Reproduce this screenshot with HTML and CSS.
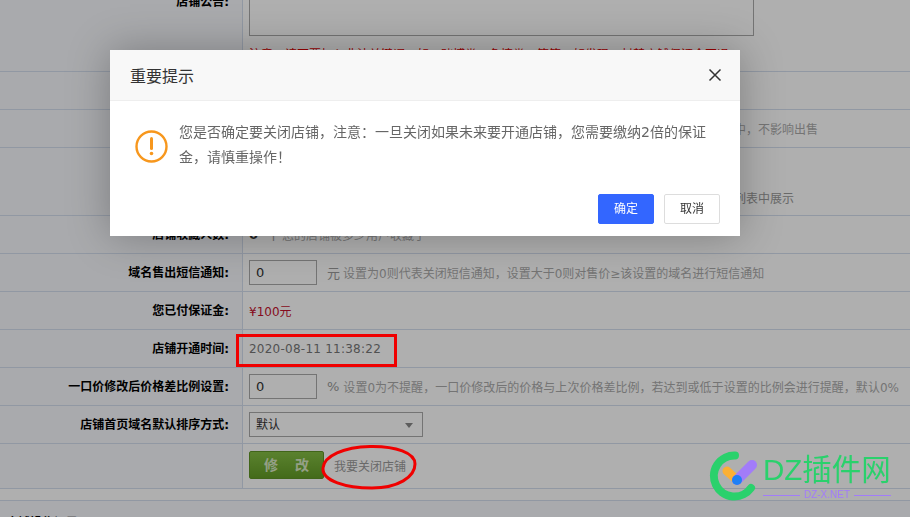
FILE: index.html
```html
<!DOCTYPE html>
<html lang="zh">

<head>
    <meta charset="UTF-8">
    <meta name="viewport" content="width=device-width, initial-scale=1.0">
    <title>店铺设置</title>
    <link rel="stylesheet" href="styles.css">
</head>

<body>
    <div class="form">
        <div class="row row-notice">
            <div class="label">店铺公告:</div>
            <div class="value value-stack">
                <div class="textarea"></div>
                <div class="note">注意，请不要加入非法关键词，如、赌博类、色情类、等等，如发现，封禁店铺保证金不退。</div>
            </div>
        </div>
        <div class="row">
            <div class="label"></div>
            <div class="value"></div>
        </div>
        <div class="row">
            <div class="label"></div>
            <div class="value"><span class="hint hint-tail">中，不影响出售</span></div>
        </div>
        <div class="row row-tall">
            <div class="label"></div>
            <div class="value value-low"><span class="hint hint-tail hint-dark">列表中展示</span></div>
        </div>
        <div class="row">
            <div class="label">店铺收藏人数:</div>
            <div class="value"><b class="count">0</b><span class="unit">个</span><span class="hint">您的店铺被多少用户收藏了</span></div>
        </div>
        <div class="row">
            <div class="label">域名售出短信通知:</div>
            <div class="value">
                <div class="input">0</div>
                <span class="unit">元</span>
                <span class="hint">设置为0则代表关闭短信通知，设置大于0则对售价≥该设置的域名进行短信通知</span>
            </div>
        </div>
        <div class="row">
            <div class="label">您已付保证金:</div>
            <div class="value"><span class="money">¥100元</span></div>
        </div>
        <div class="row">
            <div class="label">店铺开通时间:</div>
            <div class="value"><span class="time">2020-08-11 11:38:22</span></div>
        </div>
        <div class="row">
            <div class="label">一口价修改后价格差比例设置:</div>
            <div class="value">
                <div class="input">0</div>
                <span class="unit">%</span>
                <span class="hint hint-wide">设置0为不提醒，一口价修改后的价格与上次价格差比例，若达到或低于设置的比例会进行提醒，默认0%</span>
            </div>
        </div>
        <div class="row">
            <div class="label">店铺首页域名默认排序方式:</div>
            <div class="value">
                <div class="select">默认</div>
            </div>
        </div>
        <div class="row row-submit">
            <div class="label"></div>
            <div class="value">
                <div class="btn-save">修 改</div>
                <a class="close-link">我要关闭店铺</a>
            </div>
        </div>
    </div>
    <div class="section-title">店铺操作记录</div>

    <div class="mask"></div>

    <div class="modal">
        <div class="modal-head">
            <span class="modal-title">重要提示</span>
            <svg class="modal-close" width="14" height="14" viewBox="0 0 14 14">
                <path d="M1.5 1.5L12.5 12.5M12.5 1.5L1.5 12.5" stroke="#333" stroke-width="1.5" fill="none" />
            </svg>
        </div>
        <div class="modal-body">
            <svg class="modal-icon" width="33" height="33" viewBox="0 0 33 33">
                <circle cx="16.5" cy="16.5" r="15" stroke="#f7971d" stroke-width="2.4" fill="none" />
                <path d="M16.5 8.5V18.5" stroke="#f7971d" stroke-width="3" stroke-linecap="round" />
                <circle cx="16.5" cy="23.5" r="1.8" fill="#f7971d" />
            </svg>
            <p class="modal-text">您是否确定要关闭店铺，注意：一旦关闭如果未来要开通店铺，您需要缴纳2倍的保证金，请慎重操作！</p>
        </div>
        <div class="modal-foot">
            <div class="btn btn-ok">确定</div>
            <div class="btn btn-cancel">取消</div>
        </div>
    </div>

    <!-- 截图上的红色标注 -->
    <div class="mark-rect"></div>
    <svg class="mark-ellipse" width="98" height="48" viewBox="0 0 98 48">
        <path d="M3 25C4 13 24 4 50 3.5C76 3 95 10 95 21C95 34 78 45 52 45C26 45 2 38 3 25Z" stroke="#f00000" stroke-width="3" fill="none" />
    </svg>

    <!-- 水印 -->
    <div class="watermark">
        <svg class="wm-logo" width="52" height="54" viewBox="0 0 52 54">
            <path d="M27 5.5A20.5 20.5 0 1 0 43 38" stroke="#2ad16c" stroke-width="8" stroke-linecap="round" fill="none" />
            <path d="M19 21L29 30" stroke="#fbb034" stroke-width="9" stroke-linecap="round" />
            <path d="M29 30L44 15" stroke="#a27cf9" stroke-width="10" stroke-linecap="round" />
            <circle cx="29" cy="30" r="5" fill="#1e80f5" />
        </svg>
        <div class="wm-text">
            <div class="wm-name">DZ插件网</div>
            <div class="wm-sub"><i></i><span>DZ-X.NET</span><i></i></div>
        </div>
    </div>
</body>

</html>
```

FILE: styles.css
```css
html,
body {
    margin: 0;
    padding: 0;
    height: 517px;
    overflow: hidden;
}

body {
    font-family: 'DejaVu Sans', 'Noto Sans CJK SC', sans-serif;
    font-size: 12px;
    color: #333;
    background-color: #fff;
}

.form {
    margin-top: -49px;
    border-bottom: 1px solid #d3deee;
}

.row {
    display: flex;
    height: 37px;
    border-bottom: 1px solid #d3deee;
}

.row:last-child {
    border-bottom: none;
}

.row-notice {
    height: 120px;
}

.row-tall {
    height: 67px;
}

.row-submit {
    height: 44px;
}

.label {
    box-sizing: border-box;
    width: 243px;
    padding: 1px 13px 0 0;
    border-right: 1px solid #d3deee;
    background-color: #f7f8fd;
    color: #000;
    font-weight: bold;
    text-align: right;
    line-height: 37px;
    flex-shrink: 0;
}

.row-notice .label {
    padding-top: 33px;
}

.value {
    flex: 1;
    display: flex;
    align-items: center;
    padding-left: 6px;
    min-width: 0;
}

.value-stack {
    flex-direction: column;
    align-items: flex-start;
    padding-top: 4px;
}

.value-low {
    align-items: flex-end;
    padding-bottom: 9px;
}

.textarea {
    width: 503px;
    height: 79px;
    border: 1px solid #aaa;
    background-color: #fff;
}

.note {
    margin-top: 9px;
    line-height: 20px;
    color: #e00000;
    white-space: nowrap;
}

.hint {
    color: #aaa;
    white-space: nowrap;
}

.hint-wide {
    margin-left: 1px;
    letter-spacing: 0.02px;
}

.hint-tail {
    margin-left: 485px;
}

.hint-dark {
    color: #999;
}

.count {
    color: #333;
    margin-right: 9px;
    font-size: 13px;
}

.unit {
    color: #999;
    font-size: 13px;
    margin-right: 2px;
}

.value .input + .unit {
    margin-left: 10px;
    margin-right: 3px;
}

.input {
    box-sizing: border-box;
    width: 68px;
    height: 25px;
    padding-left: 6px;
    border: 1px solid #aaa;
    line-height: 24px;
    font-size: 13px;
    color: #333;
    background-color: #fff;
}

.money {
    color: #c4122e;
}

.time {
    letter-spacing: 0.24px;
    color: #777;
}

.select {
    box-sizing: border-box;
    position: relative;
    width: 174px;
    height: 25px;
    padding-left: 6px;
    border: 1px solid #aaa;
    line-height: 25px;
    color: #333;
    background-color: #fff;
}

.select::after {
    content: "";
    position: absolute;
    right: 9px;
    top: 10px;
    border-top: 5px solid #888;
    border-left: 4px solid transparent;
    border-right: 4px solid transparent;
}

.btn-save {
    box-sizing: border-box;
    width: 75px;
    height: 28px;
    border: 1px solid #5f9426;
    border-radius: 2px;
    background: linear-gradient(#84bd44, #639c26);
    color: #d8e8c4;
    font-weight: bold;
    font-size: 14px;
    line-height: 26px;
    text-align: center;
    word-spacing: 12px;
    margin-top: -3px;
}

.close-link {
    margin-left: 10px;
    margin-top: -1px;
    color: #999;
}

.section-title {
    box-sizing: border-box;
    margin-top: 11px;
    padding: 13px 0 0 6px;
    border-top: 1px solid #d3deee;
    background-color: #f7f8fd;
    height: 17px;
    overflow: hidden;
    font-weight: bold;
    color: #000;
    line-height: 18px;
}

.mask {
    position: fixed;
    top: 0;
    left: 0;
    right: 0;
    bottom: 0;
    background-color: rgba(0, 0, 0, 0.315);
}

.modal {
    position: absolute;
    left: 110px;
    top: 50px;
    width: 630px;
    height: 186px;
    display: flex;
    flex-direction: column;
    background-color: #fff;
    box-shadow: 0 0 40px rgba(0, 0, 0, 0.28);
}

.modal-head {
    display: flex;
    align-items: center;
    justify-content: space-between;
    height: 50px;
    padding: 0 18px 0 20px;
    background-color: #f8f8f8;
    border-bottom: 1px solid #eee;
    flex-shrink: 0;
}

.modal-title {
    font-size: 16px;
    color: #333;
}

.modal-body {
    flex: 1;
    display: flex;
    gap: 12px;
    padding: 20px 20px 0 25px;
}

.modal-icon {
    flex-shrink: 0;
    margin-top: 9px;
}

.modal-text {
    margin: -1px 0 0 -1px;
    font-size: 14px;
    line-height: 25px;
    color: #666;
}

.modal-foot {
    display: flex;
    justify-content: flex-end;
    gap: 10px;
    padding: 0 20px 12px 0;
}

.btn {
    box-sizing: border-box;
    width: 56px;
    height: 30px;
    border-radius: 2px;
    font-size: 12px;
    line-height: 28px;
    text-align: center;
}

.btn-ok {
    border: 1px solid #3366ff;
    background-color: #3366ff;
    color: #fff;
}

.btn-cancel {
    border: 1px solid #ddd;
    background-color: #fff;
    color: #333;
}

.mark-rect {
    position: absolute;
    left: 236px;
    top: 334px;
    width: 155px;
    height: 27px;
    border: 3px solid #f00000;
}

.mark-ellipse {
    position: absolute;
    left: 320px;
    top: 443px;
}

.watermark {
    position: absolute;
    left: 708px;
    top: 450px;
    display: flex;
    gap: 3px;
}

.wm-text {
    width: 128px;
}

.wm-name {
    font-family: 'Liberation Sans', 'Noto Sans CJK SC', sans-serif;
    font-size: 29.5px;
    line-height: 38px;
    margin-top: 1px;
    color: #2ad16c;
    white-space: nowrap;
}

.wm-sub {
    display: flex;
    align-items: center;
    gap: 4px;
    color: #a27cf9;
    font-family: 'Liberation Sans', sans-serif;
    font-size: 10px;
    line-height: 12px;
}

.wm-sub i {
    flex: 1;
    height: 1px;
    background-color: #a27cf9;
}
```
